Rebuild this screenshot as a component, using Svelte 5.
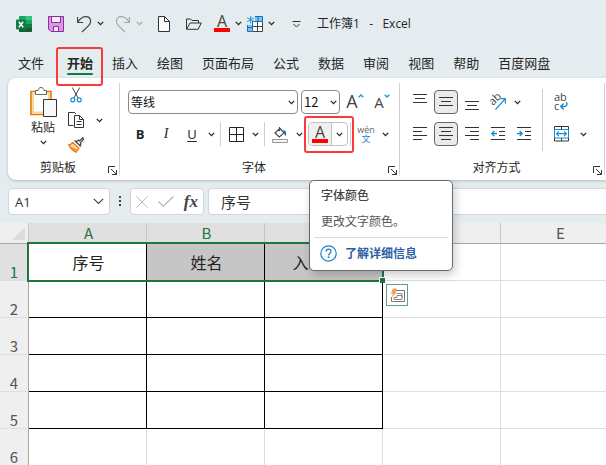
<script lang="ts">
  const tabs = ["文件", "开始", "插入", "绘图", "页面布局", "公式", "数据", "审阅", "视图", "帮助", "百度网盘"];
  let activeTab = $state("开始");

  const columns = ["A", "B", "C", "D", "E"];
  const selectedColumns = ["A", "B", "C"];
  const rows = [
    ["序号", "姓名", "入职时间", "", ""],
    ["", "", "", "", ""],
    ["", "", "", "", ""],
    ["", "", "", "", ""],
    ["", "", "", "", ""],
    ["", "", "", "", ""],
  ];

  let fontName = $state("等线");
  let fontSize = $state("12");
  let cellRef = $state("A1");
  let formula = $state("序号");
</script>

{#snippet chevron()}
  <svg width="7" height="5" viewBox="0 0 7 5" fill="none" stroke="currentColor" stroke-width="1.3"><path d="M.8.9 3.5 3.6 6.2.9" /></svg>
{/snippet}

{#snippet more(label: string)}
  <button class="chev" aria-label={label}>{@render chevron()}</button>
{/snippet}

{#snippet lines(d: string)}
  <svg width="14" height="18" viewBox="0 0 14 18" stroke="#333" fill="none"><path {d} /></svg>
{/snippet}

{#snippet launcher(label: string)}
  <button class="launcher" aria-label={label}>
    <svg width="9" height="9" viewBox="0 0 9 9" fill="none" stroke="#333"><path d="M.5 7V.5H7M3 3l5 5M8.500 4v4.500H4" /></svg>
  </button>
{/snippet}

<div class="app">
  <header class="titlebar">
    <svg class="logo" width="16" height="16" viewBox="0 0 16 16">
      <rect x="3" width="13" height="16" rx="1" fill="#21a366" />
      <path d="M9.500 0H15a1 1 0 0 1 1 1v3H9.500z" fill="#33c481" />
      <path d="M3 4h6.500v4H3z" fill="#107c41" />
      <path d="M3 8h6.500v8H4a1 1 0 0 1-1-1z" fill="#185c37" />
      <path d="M9.500 8H16v4H9.500z" fill="#107c41" />
      <path d="M9.500 12H16v3a1 1 0 0 1-1 1H9.500z" fill="#185c37" />
      <rect y="3.500" width="10" height="10" rx="1" fill="#107c41" />
      <path d="m2.800 5.800 4.400 5.400M7.200 5.800l-4.400 5.400" stroke="#fff" stroke-width="1.500" />
    </svg>
    <button class="quick" aria-label="保存">
      <svg width="16" height="16" viewBox="0 0 16 16" fill="#d79ae0" stroke="#9129a4"><path d="M.5.5h15v15H3L.5 13z" /><path d="M3.500.5h9v6h-9z" fill="#f4eef6" /><path d="M5.500 15.500v-5h5v5z" fill="#f4eef6" /></svg>
    </button>
    <div class="split">
      <button class="icon" aria-label="撤消">
        <svg width="16" height="18" viewBox="0 0 16 18" fill="none" stroke="#444" stroke-width="1.200"><path d="M1.600 2v5.500h5.500M1.600 7.300C4 4 6.500 1.700 9.700 1.700c3 0 4.900 2 4.900 4.600 0 1.700-.7 3-2 4.300L6 17" /></svg>
      </button>
      {@render more("撤消选项")}
    </div>
    <div class="split disabled">
      <button class="icon" aria-label="恢复" disabled>
        <svg width="16" height="18" viewBox="0 0 16 18" fill="none" stroke="#a4a9ac" stroke-width="1.200"><path d="M14.400 2v5.500H8.900M14.400 7.300C12 4 9.500 1.700 6.300 1.700c-3 0-4.900 2-4.900 4.600 0 1.700.7 3 2 4.300L10 17" /></svg>
      </button>
      {@render more("恢复选项")}
    </div>
    <button class="quick" aria-label="新建">
      <svg width="12" height="16" viewBox="0 0 12 16" fill="#fafafa" stroke="#333"><path d="M.5.5h6l5 5v10H.5z" /><path d="M6.500.5v5h5" fill="none" /></svg>
    </button>
    <button class="quick" aria-label="打开">
      <svg width="16" height="12" viewBox="0 0 16 12" fill="none" stroke="#333"><path d="M.5 11V1h4l1.500 1.500h6.500V5M.6 11.300 4 5h11.300L12.200 11.300z" /></svg>
    </button>
    <div class="cluster">
      <div class="split">
        <button class="icon" aria-label="字体颜色"><span class="letter-a">A</span></button>
        {@render more("更多字体颜色")}
      </div>
      <div class="split">
        <button class="icon" aria-label="冻结窗格">
          <svg width="16" height="16" viewBox="0 0 16 16" fill="none">
            <path d="M8 1h7.500v4.500H8zM.5 9H5.500v6.500h-5z" fill="#83beec" />
            <path d="M5.500 5.500h10v10h-10z" fill="#fff" />
            <path d="M5.500 10.500h10M10.500 5.500v10M6 15.500h9.500v-10" stroke="#444" />
            <path d="M8 .5h7.500v5h-10v10h-5V9M11 .5v5M.5 11.500h5" stroke="#1271b5" />
            <path d="M3.700 0v7.500M.2 1.700l7 4M7.200 1.700l-7 4" stroke="#2490d6" />
          </svg>
        </button>
        {@render more("冻结窗格选项")}
      </div>
    </div>
    <button class="quick" aria-label="自定义快速访问工具栏">
      <svg width="9" height="8" viewBox="0 0 9 8" fill="none" stroke="#333"><path d="M.5 1.500h8M1.500 4l3 3 3-3" /></svg>
    </button>
    <span class="doc-title">工作簿1&nbsp;&nbsp; -&nbsp;&nbsp; Excel</span>
  </header>

  <nav class="tabs">
    {#each tabs as tab}
      <button class="tab" class:active={tab === activeTab} onclick={() => (activeTab = tab)}>{tab}</button>
    {/each}
  </nav>

  <section class="ribbon">
    <div class="group">
      <div class="clipboard">
        <button class="paste">
          <svg width="27" height="30" viewBox="0 0 27 30" fill="none">
            <path d="M1 4.500h20v23H1z" fill="#fff" stroke="#e07b00" stroke-width="1.600" />
            <path d="M3 6.500h16v19H3z" stroke="#f8d79c" stroke-width="2" />
            <path d="M5.500 7.500v-4H8c.3-2 1.400-3 3-3s2.700 1 3 3h2.500v4z" fill="#fff" stroke="#666" />
            <path d="M13.500 12.500h13v17h-13z" fill="#f8f8f8" stroke="#333" />
          </svg>
          <span>粘贴</span>
          {@render chevron()}
        </button>
        <div class="clip-tools">
          <button class="icon" aria-label="剪切">
            <svg width="12" height="16" viewBox="0 0 12 16" fill="none"><path d="m2.300.5 5.800 10.500M9.700.5 3.900 11" stroke="#444" /><circle cx="2.800" cy="12.800" r="2" stroke="#1e88d0" stroke-width="1.200" /><circle cx="9.200" cy="12.800" r="2" stroke="#1e88d0" stroke-width="1.200" /></svg>
          </button>
          <div class="split">
            <button class="icon" aria-label="复制">
              <svg width="16" height="16" viewBox="0 0 16 16" fill="#fff" stroke="#333"><path d="M5.500 13.500h-5V.5h6l1.500 1.500" /><path d="M6.500 3.500h5l4 4v8h-9z" /><path d="M11.500 3.500v4h4M8.500 9.500h5M8.500 12.500h5" fill="none" /></svg>
            </button>
            <span class="copy-more">{@render more("复制选项")}</span>
          </div>
          <button class="icon" aria-label="格式刷">
            <svg width="16" height="16" viewBox="0 0 16 16" fill="none"><path d="m4.500 5.500 6.500 5.500-3 4.300C5.500 14 2 11 .8 7.800c1.600.3 2.800-.8 3.700-2.300z" fill="#fbd9a6" stroke="#df7410" stroke-width="1.200" /><path d="m4 11.500 5 1.500M2 9l7 3.500-2 2z" fill="#ee8b22" /><path d="m6.500 3.500 6.500 6M8 5l2.500-2 1 1L14.800.8l.7 1.500-3 3.300L13 7l-1.800 1.800" fill="#eee" stroke="#444" stroke-width="1.200" /></svg>
          </button>
        </div>
      </div>
      <footer><span>剪贴板</span>{@render launcher("剪贴板设置")}</footer>
    </div>

    <div class="group">
      <div class="body">
        <div class="row wide">
          <label class="combo font-name">
            <select bind:value={fontName} aria-label="字体"><option>等线</option></select>
            {@render chevron()}
          </label>
          <label class="combo font-size">
            <select bind:value={fontSize} aria-label="字号"><option>12</option></select>
            {@render chevron()}
          </label>
          <button class="icon grow" aria-label="增大字号">
            <span class="big">A</span>
            <svg width="6" height="4" viewBox="0 0 6 4" fill="none" stroke="#2490d6" stroke-width="1.300"><path d="m.7 3.300 2.300-2.300 2.300 2.300" /></svg>
          </button>
          <button class="icon grow" aria-label="减小字号">
            <span>A</span>
            <svg width="6" height="4" viewBox="0 0 6 4" fill="none" stroke="#2490d6" stroke-width="1.300"><path d="m.7.7 2.300 2.300 2.300-2.300" /></svg>
          </button>
        </div>
        <div class="row">
          <button class="icon bold">B</button>
          <button class="icon italic">I</button>
          <div class="split">
            <button class="icon underline">U</button>
            {@render more("下划线选项")}
          </div>
          <i class="sep"></i>
          <div class="split">
            <button class="icon" aria-label="边框">
              <svg width="15" height="15" viewBox="0 0 15 15" fill="none" stroke="#222"><path d="M.5.5h14v14H.5zM7.500.5v14M.5 7.500h14" /></svg>
            </button>
            {@render more("边框选项")}
          </div>
          <i class="sep"></i>
          <div class="split">
            <button class="icon" aria-label="填充颜色">
              <svg width="16" height="17" viewBox="0 0 16 17" fill="none"><path d="M7.500 1v4M3 7l5-4.700 4 4.500L7.300 11z" stroke="#444" stroke-width="1.100" /><path d="M11 4.500c3-.5 3.500 1.500 3 5.500-1.700-.5-1.600-3-2.300-4" fill="#1271b5" /><path d="M.5 13.500h15v3H.5z" fill="#f4f4f4" stroke="#999" /></svg>
            </button>
            {@render more("填充颜色选项")}
          </div>
          <div class="split font-color">
            <button class="icon" aria-label="字体颜色" aria-describedby="font-color-tip"><span class="letter-a">A</span></button>
            {@render more("字体颜色选项")}
            <div class="tooltip" id="font-color-tip" role="tooltip">
              <strong>字体颜色</strong>
              <p>更改文字颜色。</p>
              <a href="#help">
                <svg width="17" height="17" viewBox="0 0 17 17" fill="none" stroke="#1e7fc4" stroke-width="1.200"><circle cx="8.500" cy="8.500" r="7.700" /><path d="M6 6.600c0-1.500 1-2.400 2.500-2.400S11 5.100 11 6.400c0 1.800-2.400 1.900-2.400 4" /><circle cx="8.600" cy="12.300" r=".4" /></svg>
                了解详细信息
              </a>
            </div>
          </div>
          <i class="sep"></i>
          <div class="split">
            <button class="icon pinyin" aria-label="显示拼音"><span>wén</span><em>文</em></button>
            {@render more("拼音选项")}
          </div>
        </div>
      </div>
      <footer><span>字体</span>{@render launcher("字体设置")}</footer>
    </div>

    <div class="group">
      <div class="align">
        <div class="body">
          <div class="row">
            <button class="icon" aria-label="顶端对齐">{@render lines("M0 1.500h14M2 5.500h10M0 9.500h14")}</button>
            <button class="icon pressed" aria-label="垂直居中">{@render lines("M0 4.500h14M2 8.500h10M0 12.500h14")}</button>
            <button class="icon" aria-label="底端对齐">{@render lines("M0 8.500h14M2 12.500h10M0 16.500h14")}</button>
            <div class="split">
              <button class="icon" aria-label="方向">
                <svg width="18" height="18" viewBox="0 0 18 18" fill="none"><text x="4" y="13" transform="rotate(-45 4 13)" font-size="11" fill="#444">ab</text><path d="M6.500 16.500 16 6M11.500 5.600h4.900v4.900" stroke="#2490d6" stroke-width="1.200" /></svg>
              </button>
              {@render more("方向选项")}
            </div>
          </div>
          <div class="row">
            <button class="icon" aria-label="左对齐">{@render lines("M0 2.500h14M0 6.500h9M0 10.500h14M0 14.500h9")}</button>
            <button class="icon pressed" aria-label="居中">{@render lines("M0 2.500h14M2 6.500h10M0 10.500h14M2 14.500h10")}</button>
            <button class="icon" aria-label="右对齐">{@render lines("M0 2.500h14M5 6.500h9M0 10.500h14M5 14.500h9")}</button>
            <button class="icon" aria-label="减少缩进量">
              <svg width="14" height="18" viewBox="0 0 14 18" fill="none" stroke="#333"><path d="M0 2.500h14M8 6.500h6M8 10.500h6M0 14.500h14" /><path d="M6 8.500H.8M3.300 6 .8 8.500 3.300 11" stroke="#1e88d0" stroke-width="1.300" /></svg>
            </button>
            <button class="icon" aria-label="增加缩进量">
              <svg width="14" height="18" viewBox="0 0 14 18" fill="none" stroke="#333"><path d="M0 2.500h14M8 6.500h6M8 10.500h6M0 14.500h14" /><path d="M0 8.500h5.200M2.700 6l2.500 2.500L2.700 11" stroke="#1e88d0" stroke-width="1.300" /></svg>
            </button>
          </div>
        </div>
        <i class="sep tall"></i>
        <div class="body">
          <button class="icon" aria-label="自动换行">
            <svg width="16" height="18" viewBox="0 0 16 18" fill="none"><text x="1" y="8" font-size="11" fill="#444">ab</text><text x="1" y="17" font-size="11" fill="#444">c</text><path d="M13.500 9c1.200 2.800-.2 4.500-2.500 4.500H8M10.700 10.500l-3 3 3 3" stroke="#1e88d0" stroke-width="1.400" /></svg>
          </button>
          <div class="split merge">
            <button class="icon" aria-label="合并后居中">
              <svg width="15" height="16" viewBox="0 0 15 16" fill="none" stroke="#333"><path d="M.5.5h14v14.500H.5zM7.500.5v3M7.500 12v3" /><path d="M.5 3.500h14v8.500H.5z" fill="#fff" stroke="#1e88d0" /><path d="M2.500 7.700h10M5 5.300 2.600 7.700 5 10.100M10 5.300l2.400 2.400-2.400 2.400" stroke="#1e88d0" stroke-width="1.200" /></svg>
            </button>
            {@render more("合并选项")}
          </div>
        </div>
      </div>
      <footer><span>对齐方式</span>{@render launcher("对齐设置")}</footer>
    </div>
  </section>

  <section class="formula-bar">
    <label class="name-box">
      <input bind:value={cellRef} aria-label="名称框" />
      <svg width="11" height="7" viewBox="0 0 11 7" fill="none" stroke="#444" stroke-width="1.200"><path d="m.8.800 4.700 4.700L10.200.8" /></svg>
    </label>
    <svg class="dots" width="3" height="11" viewBox="0 0 3 11" fill="#444"><path d="M0 0h2v2H0zM0 4h2v2H0zM0 8h2v2H0z" /></svg>
    <div class="fx-tools">
      <button aria-label="取消"><svg width="12" height="12" viewBox="0 0 12 12" stroke="#b5b5b5"><path d="m.5.5 11 11M11.500.5l-11 11" /></svg></button>
      <button aria-label="输入"><svg width="16" height="11" viewBox="0 0 16 11" fill="none" stroke="#b5b5b5" stroke-width="1.200"><path d="m.5 5.500 4.700 4.700L15.500.5" /></svg></button>
      <button class="fx">fx</button>
    </div>
    <input class="formula" bind:value={formula} aria-label="编辑栏" />
  </section>

  <div class="sheet">
    <table>
      <colgroup>
        <col class="head-col" />
        {#each columns.slice(1) as _}<col class="data-col" />{/each}
        <col />
      </colgroup>
      <thead>
        <tr>
          <th class="corner" aria-label="全选"><svg width="13" height="13" viewBox="0 0 13 13"><path d="M13 0v13H0z" fill="#dcdcdc" /></svg></th>
          {#each columns as col}
            <th class:selected={selectedColumns.includes(col)}>{col}</th>
          {/each}
        </tr>
      </thead>
      <tbody>
        {#each rows as row, r}
          <tr>
            <th class:selected={r === 0}>{r + 1}</th>
            {#each row as cell, c}
              <td class:boxed={r < 5 && c < 3} class:shaded={r === 0 && (c === 1 || c === 2)}>{cell}</td>
            {/each}
          </tr>
        {/each}
      </tbody>
    </table>
    <div class="selection"><i class="handle"></i></div>
    <button class="quick-analysis" aria-label="快速分析">
      <svg width="15" height="15" viewBox="0 0 15 15" fill="none"><path d="M6 2.500h8.500v11H1.500V9" stroke="#777" /><path d="M7 5.500h5v4M4 11.500v-2h3v-2h5v4z" stroke="#888" /><path d="M3 .5h4L5.500 4H7L1.500 9.500 3 5.500H.8z" fill="#eea053" /></svg>
    </button>
  </div>
</div>

<style>
  :global(body) {
    overflow: hidden;
  }

  .app {
    --cjk: "Noto Sans CJK SC", sans-serif;
    min-height: 100vh;
    background: #e5ecef;
    color: #262626;
    font: 12px/16px "Open Sans", var(--cjk);
    overflow: hidden;
  }

  button {
    display: flex;
    align-items: center;
    justify-content: center;
    flex: none;
    margin: 0;
    padding: 0;
    border: 0;
    background: none;
    color: inherit;
    font: inherit;
  }

  svg { display: block; flex: none; overflow: visible; }

  .split, .cluster { display: flex; }

  .titlebar {
    display: flex;
    align-items: center;
    gap: 6px;
    height: 47px;
    padding-left: 16px;
  }

  .quick { width: 24px; height: 24px; }
  .logo + .quick { margin-left: 6px; }
  .titlebar .icon { width: 20px; }
  .titlebar .chev { width: 13px; }
  .disabled { color: #a4a9ac; }
  .doc-title { margin-left: 3px; white-space: nowrap; }

  .letter-a {
    width: 16px;
    border-bottom: 4px solid #f00;
    font-size: 16px;
    line-height: 13px;
    text-align: center;
    color: #444;
  }

  .tabs {
    display: flex;
    gap: 19px;
    height: 31px;
    padding-left: 18px;
  }

  .tab {
    position: relative;
    height: 31px;
    font: 13px/20px var(--cjk);
    white-space: nowrap;
  }

  .tab:first-child { margin-right: 4px; }
  .tab.active { font-weight: 700; }

  .tab.active::before {
    content: "";
    position: absolute;
    inset: auto 0 3px;
    height: 2px;
    border-radius: 1px;
    background: #107c41;
  }

  .tab.active::after {
    content: "";
    position: absolute;
    inset: 0 -10px -8px -11px;
    border: 2px solid #fb3a3a;
    border-radius: 3px;
    z-index: 2;
  }

  .ribbon {
    display: flex;
    margin-left: 8px;
    padding: 5px 0;
    background: #fff;
    border-radius: 8px 0 0 8px;
    box-shadow: 0 1px 3px rgba(0, 0, 0, 0.22);
  }

  .group {
    display: flex;
    flex-direction: column;
    justify-content: space-between;
    height: 92px;
    border-right: 1px solid #d0d0d0;
  }

  footer {
    display: flex;
    align-items: center;
    height: 14px;
    padding-right: 2px;
  }

  footer span { flex: 1; text-align: center; }
  .launcher { align-self: flex-end; }

  .clipboard {
    display: flex;
    gap: 6px;
    padding: 0 13px 0 20px;
  }

  .paste {
    flex-direction: column;
    justify-content: flex-start;
    width: 30px;
    padding-top: 4px;
  }

  .paste span { margin: 3px 0 4px; }

  .clip-tools {
    display: flex;
    flex-direction: column;
    gap: 1px;
  }

  .copy-more { margin-left: 4px; }

  .body {
    display: flex;
    flex-direction: column;
    gap: 8px;
    padding: 7px 5px 0 8px;
  }

  .row { display: flex; gap: 2px; }
  .row.wide { gap: 3px; }
  .icon { width: 24px; height: 24px; }
  .chev { width: 14px; height: 24px; }

  .sep {
    width: 1px;
    height: 24px;
    margin-right: 1px;
    background: #d0d0d0;
  }

  .sep.tall { height: 62px; margin: 6px 0 0 1px; }

  .combo {
    position: relative;
    display: flex;
    align-items: center;
  }

  .combo svg { position: absolute; right: 3px; pointer-events: none; }

  .combo select {
    width: 100%;
    height: 24px;
    padding: 0 2px;
    border: 1px solid #8a8a8a;
    border-radius: 4px;
    background: #fff;
    color: #111;
    font: 13px/20px var(--cjk);
    appearance: none;
  }

  .font-name { width: 170px; }
  .font-name select { font-size: 12px; }
  .font-size { width: 39px; }

  .grow { align-items: flex-start; font-size: 15px; line-height: 24px; color: #444; }
  .grow .big { font-size: 18px; line-height: 22px; }
  .grow svg { margin-top: 4px; }

  .bold { font-weight: 700; font-size: 13px; }
  .italic { font: italic 14px "Liberation Serif", serif; }
  .underline { font-size: 13px; text-decoration: underline; text-underline-offset: 2px; }

  .font-color {
    position: relative;
    width: 40px;
    box-sizing: border-box;
    border: 1px solid #c2c2c2;
    border-radius: 4px;
  }

  .font-color .icon { width: 22px; height: 22px; background: #f0f0f0; border-radius: 3px 0 0 3px; }
  .font-color .chev { width: 16px; height: 22px; border-left: 1px solid #c2c2c2; }

  .font-color::before {
    content: "";
    position: absolute;
    inset: -7px -7px -8px -5px;
    border: 2px solid #fb3a3a;
    border-radius: 3px;
  }

  .tooltip {
    position: absolute;
    top: 57px;
    left: 0;
    width: 144px;
    box-sizing: border-box;
    padding: 7px 4px;
    border: 1px solid #6a6a6a;
    border-radius: 5px;
    background: #fff;
    box-shadow: 2px 4px 10px rgba(0, 0, 0, 0.2);
    color: #555;
    z-index: 5;
  }

  .tooltip strong, .tooltip p { display: block; margin: 0 7px; }
  .tooltip strong { font-weight: 500; color: #444; }
  .tooltip p { margin-top: 10px; }

  .tooltip a {
    display: flex;
    align-items: center;
    gap: 8px;
    margin-top: 7px;
    padding: 7px 0 1px 6px;
    border-top: 1px solid #dcdcdc;
    color: #2b5fa3;
    font-weight: 700;
    text-decoration: none;
    white-space: nowrap;
  }

  .pinyin { flex-direction: column; font-size: 9px; line-height: 9px; color: #666; }
  .pinyin em { color: #1e88d0; font-style: normal; }

  .align { display: flex; }
  .align .sep + .body { padding: 7px 11px 0 6px; }
  .merge .chev { width: 20px; }
  .pressed { border: 1px solid #666; border-radius: 4px; background: #ebebeb; }

  .formula-bar {
    display: flex;
    align-items: center;
    height: 43px;
    padding-left: 8px;
  }

  .name-box, .fx-tools, .formula {
    height: 27px;
    box-sizing: border-box;
    border: 1px solid #d2d6d8;
    border-radius: 4px;
    background: #fff;
  }

  .name-box {
    display: flex;
    align-items: center;
    width: 102px;
    padding: 0 5px 0 6px;
  }

  input {
    min-width: 0;
    padding: 0;
    border: 0;
    outline: 0;
    color: #333;
    font: 15px/24px var(--cjk);
  }

  .name-box input { flex: 1; font: 13px/24px "Open Sans", sans-serif; }
  .dots { margin: 0 8px 0 9px; }

  .fx-tools {
    display: flex;
    align-items: center;
    justify-content: space-between;
    width: 74px;
    margin-right: 4px;
    padding: 0 5px;
  }

  .fx { font: italic 700 17px/20px "Liberation Serif", serif; color: #444; }

  .formula {
    flex: 1;
    padding-left: 12px;
    border-right: 0;
    border-radius: 4px 0 0 4px;
  }

  .sheet { position: relative; background: #fff; }

  table {
    width: 100%;
    min-width: 619px;
    table-layout: fixed;
    border-collapse: separate;
    border-spacing: 0;
    font: 15px/16px var(--cjk);
  }

  .head-col { width: 29px; }
  .data-col { width: 118px; }

  th, td {
    box-sizing: border-box;
    padding: 0 0 0 2px;
    border: solid #dedede;
    border-width: 0 1px 1px 0;
  }

  td { height: 37px; font-size: 16px; text-align: center; color: #222; }
  td.boxed { border-color: #000; }
  td.shaded { background: #c6c6c6; }

  th { background: #efefef; color: #555; font-weight: 400; }
  thead th { height: 21px; line-height: 20px; border-bottom-color: #a6a6a6; border-right-color: #c6c6c6; }
  tbody th { padding-left: 0; border-right-color: #a6a6a6; vertical-align: bottom; }
  th.selected { background: #e0e0e0; color: #217346; }
  .corner svg { margin: 4px 3px 3px auto; }

  .selection {
    position: absolute;
    top: 19px;
    left: 27px;
    width: 357px;
    height: 40px;
    box-sizing: border-box;
    border: 2px solid #217346;
    pointer-events: none;
  }

  .handle {
    position: absolute;
    right: -3px;
    bottom: -3px;
    width: 5px;
    height: 5px;
    border: solid #fff;
    border-width: 1px 0 0 1px;
    background: #217346;
  }

  .quick-analysis {
    position: absolute;
    top: 61px;
    left: 386px;
    width: 22px;
    height: 22px;
    border: 1px solid #5f9f7c;
    background: #fff;
  }
</style>
